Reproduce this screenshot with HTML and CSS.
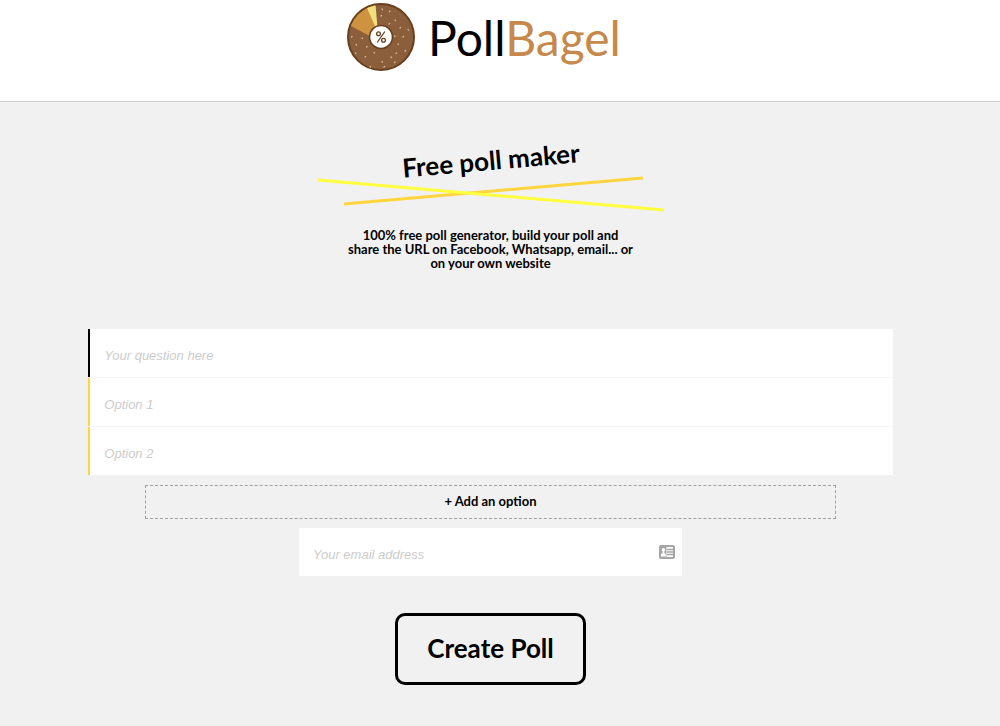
FILE: index.html
```html
<!DOCTYPE html>
<html lang="en">
<head>
    <meta charset="UTF-8">
    <meta name="viewport" content="width=device-width, initial-scale=1.0">
    <title>PollBagel - Free poll maker</title>
    <link rel="stylesheet" href="styles.css">
</head>
<body>
    <header class="header">
        <a href="#" class="logo">
            <svg class="logo-bagel" viewBox="0 0 70 70" aria-hidden="true">
                <circle cx="35" cy="35" r="33" fill="#8b5e3c"/>
                <path d="M35 40 L4 23.500 A33 33 0 0 1 21 5 L31 28 Z" fill="#cd933f"/>
                <path d="M32 31 L20.500 5 A33 33 0 0 1 29.500 2.500 Z" fill="#f1de7c"/>
                <circle cx="35" cy="35" r="33" fill="none" stroke="#68401f" stroke-width="2"/>
                <g stroke="#d5b98a" stroke-width="1.3" stroke-linecap="round">
                    <path d="M36 7l.5 .5M44 9l-.5 .7M35 14l.5-.5M49 18l.5 .6M43 22l.6-.5M54 26l.5-.6M62 27.500l.6 .5M48.500 34l.5 .6M57 35l.6-.5M52 42l.5 .6M59 49l.6-.5M50 51.500l.5-.6M45 55l.5 .5M48.500 60.500l.6-.5M36 59.500l.5 .6M38 65l.6-.5M24 64.500l.5 .5M28 50.500l.5 .6M19 55l.6-.5M9.500 51l.5 .6M20.500 45l.6-.5M10 42.500l.5 .5M16 36l.5 .6M5.500 35l.5-.5"/>
                </g>
                <circle cx="35" cy="35" r="11.500" fill="#fff" stroke="#68401f" stroke-width="1.600"/>
                <g fill="none" stroke="#68401f" stroke-width="1.300" stroke-linecap="round">
                    <circle cx="32.500" cy="31.800" r="1.900"/>
                    <circle cx="37.500" cy="38.200" r="1.900"/>
                    <path d="M38.500 30L31.500 40"/>
                </g>
            </svg>
            <span class="logo-text">Poll<span class="logo-accent">Bagel</span></span>
        </a>
    </header>

    <main class="main">
        <h1 class="title">Free poll maker</h1>
        <svg class="strokes" viewBox="0 0 348 36" aria-hidden="true">
            <path d="M27 28L326 2" stroke="#ffd53d" stroke-width="3"/>
            <path d="M1 4L347 34" stroke="#ffff3d" stroke-width="3"/>
        </svg>
        <p class="intro">100% free poll generator, build your poll and share the URL on Facebook, Whatsapp, email... or on your own website</p>

        <form class="poll-form">
            <div class="fields">
                <input type="text" class="field field-question" placeholder="Your question here" aria-label="Your question">
                <input type="text" class="field field-option" placeholder="Option 1" aria-label="Option 1">
                <input type="text" class="field field-option" placeholder="Option 2" aria-label="Option 2">
            </div>
            <button type="button" class="add-option">+ Add an option</button>
            <div class="email">
                <input type="email" class="field field-email" placeholder="Your email address" aria-label="Your email address">
                <svg class="email-icon" viewBox="0 0 16 14" aria-hidden="true">
                    <rect x="1" y="1" width="14" height="12" rx="1" fill="#fff" stroke="#a6a6a6" stroke-width="2"/>
                    <path d="M8 4.500h7M8 7h7M8 9.500h7" stroke="#a6a6a6" stroke-width="1.300"/>
                    <path d="M2 2h5.500v10H2z" fill="#a6a6a6"/>
                    <circle cx="4.500" cy="4.700" r="1.700" fill="#fff"/>
                    <path d="M3.700 6h1.600v2l1.500 1v2.500H2V9l1.700-1z" fill="#fff"/>
                </svg>
            </div>
            <button type="submit" class="create">Create Poll</button>
        </form>
    </main>
</body>
</html>
```
FILE: styles.css
```css
* {
    margin: 0;
    padding: 0;
    box-sizing: border-box;
}

body {
    min-height: 100vh;
    background: #f1f1f1;
    color: #000;
    font-family: Lato, sans-serif;
}

.header {
    display: flex;
    justify-content: center;
    background: #fff;
    border-bottom: 1px solid #d0d0d0;
    padding: 1px 33px 28px 0;
}

.logo {
    display: flex;
    align-items: center;
    gap: 12px;
    color: #000;
    text-decoration: none;
}

.logo-bagel {
    width: 70px;
    height: 70px;
}

.logo-text {
    padding-top: 2px;
    font-size: 48px;
    line-height: 70px;
}

.logo-accent {
    color: #c6884b;
}

.main {
    display: flex;
    flex-direction: column;
    align-items: center;
    padding: 42px 19px 40px 0;
}

.title {
    font-size: 26px;
    line-height: 32px;
    font-weight: 700;
    transform: rotate(-5deg);
}

.strokes {
    width: 348px;
    height: 36px;
}

.intro {
    max-width: 288px;
    margin-top: 16px;
    font-size: 13px;
    line-height: 14px;
    font-weight: 700;
    text-align: center;
}

.poll-form {
    display: flex;
    flex-direction: column;
    align-items: center;
    width: 82%;
    margin-top: 59px;
}

.fields {
    display: flex;
    flex-direction: column;
    gap: 1px;
    width: 100%;
    background: #f6f6f6;
}

.field {
    width: 100%;
    height: 48px;
    padding: 4px 14px 0;
    border: 0;
    background: #fff;
    font-family: "Liberation Sans", Arial, sans-serif;
    font-size: 13px;
}

.field::placeholder {
    color: #ccc;
    font-style: italic;
}

.field-question {
    border-left: 2px solid #000;
}

.field-option {
    border-left: 2px solid #ffd53d;
}

.add-option {
    width: 86%;
    height: 34px;
    margin-top: 10px;
    padding-bottom: 2px;
    border: 1px dashed #a0a0a0;
    background: transparent;
    color: #000;
    font-family: inherit;
    font-size: 13px;
    font-weight: 700;
    cursor: pointer;
}

.email {
    position: relative;
    width: 383px;
    max-width: 100%;
    margin-top: 9px;
}

.field-email {
    display: block;
    padding-right: 32px;
}

.email-icon {
    position: absolute;
    top: 17px;
    right: 7px;
    width: 16px;
    height: 14px;
}

.create {
    margin-top: 37px;
    padding: 15px 29px 17px;
    border: 3px solid #000;
    border-radius: 10px;
    background: transparent;
    color: #000;
    font-family: inherit;
    font-size: 26px;
    line-height: 34px;
    font-weight: 700;
    cursor: pointer;
}
```
